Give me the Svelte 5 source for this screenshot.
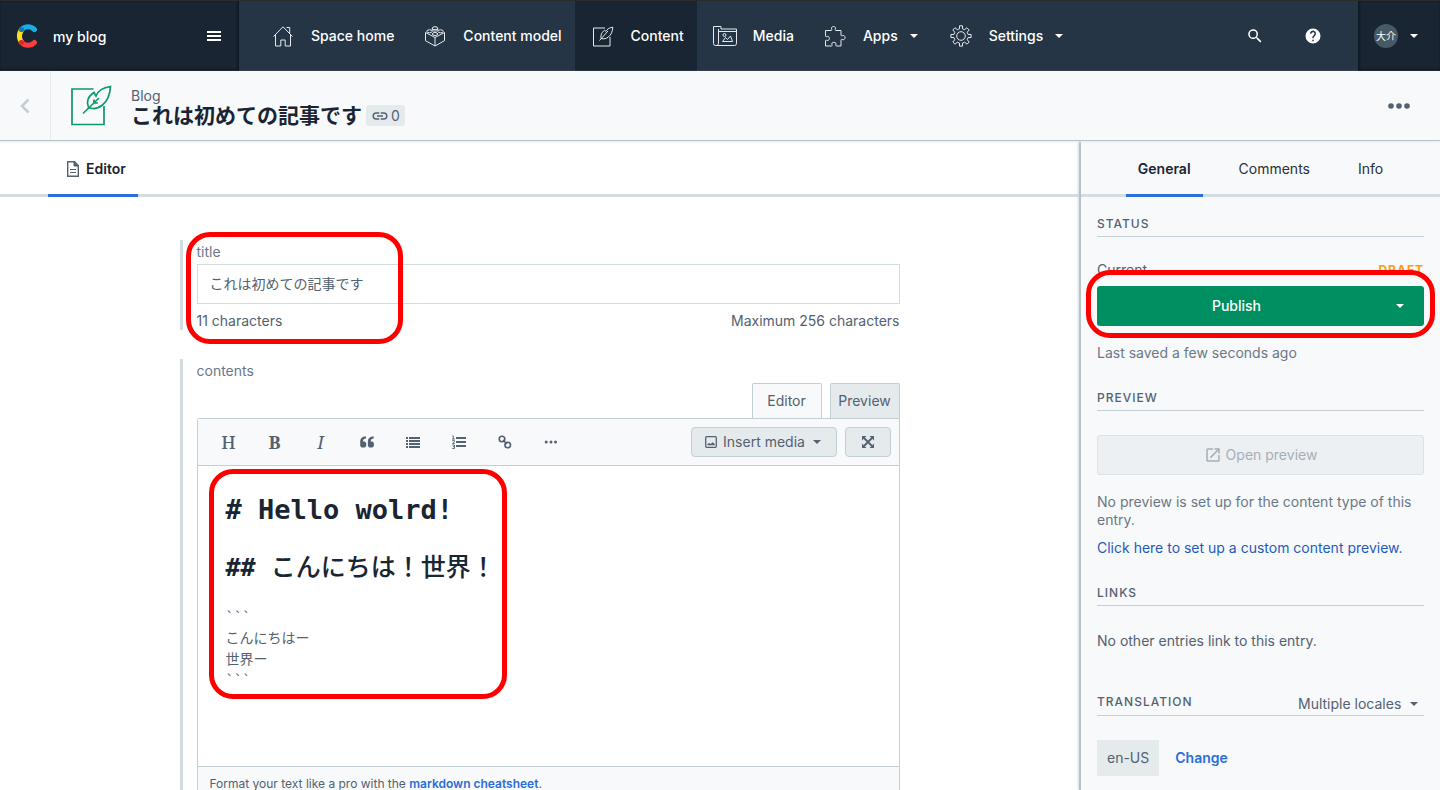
<script lang="ts">
  let title = $state("これは初めての記事です");
  let locale = $state("multiple");
  const maxLength = 256;

  const navItems = [
    { id: "home", label: "Space home" },
    { id: "model", label: "Content model" },
    { id: "content", label: "Content", active: true },
    { id: "media", label: "Media" },
    { id: "apps", label: "Apps", menu: true },
    { id: "settings", label: "Settings", menu: true },
  ];

  const tools = ["Heading", "Bold", "Italic", "Quote", "Bullet list", "Numbered list", "Link", "More"];
  const sideTabs = ["General", "Comments", "Info"];
</script>

{#snippet caret()}
  <svg class="caret" viewBox="0 0 20 20"><path d="M6 8h8l-4 4z" /></svg>
{/snippet}

{#snippet navIcon(id)}
  <svg class="line-icon" viewBox="0 0 24 24">
    {#if id === "home"}
      <path d="M2.5 12.5L12 2.8l9.500 9.700M15.500 3.500h3.200v5.800M4.500 11v11h5.300v-6h4.400v6h5.300V11" />
    {:else if id === "model"}
      <path d="M2.500 8.500v8.200L12 22l9.500-5.300V8.500L12 13.500zM12 13.500V22" />
      <ellipse cx="12" cy="4.200" rx="2.700" ry="1.500" />
      <ellipse cx="6.500" cy="7.300" rx="2.700" ry="1.500" />
      <ellipse cx="17.500" cy="7.300" rx="2.700" ry="1.500" />
      <ellipse cx="12" cy="10" rx="2.700" ry="1.500" />
      <path d="M9.300 4.200v2c1 1.200 4.400 1.200 5.400 0v-2" />
    {:else if id === "content"}
      <path d="M14 4H2.500v18H19V13M8.500 16.500L17 7M10.200 14.500c-1-3.200.8-6.500 3.300-8.300l1 1.200c1.600-2.300 4.500-4 7.300-4.200-.2 4-1.600 7.700-4.500 9.900-2.100 1.600-4.500 2.200-7.100 1.400z" />
    {:else if id === "media"}
      <path d="M5.500 19V5M.500 2.500H8V5h15.500v14.500a2 2 0 0 1-2 2h-19a2 2 0 0 1-2-2zM5.500 7.500h18M5.500 18.500c0 2-.5 3-2.500 3" />
      <path d="M9.500 17.500l3-4 2 2 3-3.500 2 5.500z" />
      <circle cx="11.500" cy="11" r="1.500" />
    {:else if id === "apps"}
      <path d="M2.500 6.500H8c.8 0 1-.5.700-1.200-.8-1.600.3-2.800 1.800-2.800s2.600 1.200 1.800 2.800c-.3.700-.1 1.200.7 1.200h5V11c0 .8.500 1 1.200.700 1.500-.8 2.800.3 2.800 1.900s-1.300 2.700-2.800 1.900c-.7-.3-1.200-.1-1.200.7V22h-4.500c-.8 0-1-.5-.7-1.200.8-1.500-.4-2.500-1.900-2.500s-2.700 1-1.900 2.500c.3.700.1 1.200-.7 1.200H2.500v-5c0-.8.500-1 1.200-.7 1.600.8 2.600-.4 2.600-1.900s-1-2.600-2.600-1.800c-.7.300-1.200.1-1.200-.7z" />
    {:else}
      <path d="M10.500 1.800h3v3l2.200.9 2.200-2 2.300 2.300-2 2.200.9 2.300h3v3h-3l-.9 2.200 2 2.300-2.200 2.200-2.300-2-2.200.9v3h-3v-3l-2.200-.9-2.300 2L3.800 18l2-2.300-.9-2.200h-3v-3h3l.9-2.300-2-2.200L6 3.700l2.300 2 2.200-.9z" />
      <circle cx="12" cy="12" r="4.300" />
    {/if}
  </svg>
{/snippet}

<div class="app">
  <header class="topbar">
    <div class="space">
      <svg class="logo" viewBox="0 0 22 24">
        <path d="M6 5.500a9.500 9.500 0 0 0 0 13" stroke="#ffe01b" />
        <path d="M5.500 5.500a9 9 0 0 1 13 0" stroke="#19aee5" />
        <path d="M5.500 18.500a9 9 0 0 0 13 0" stroke="#ff3d3d" />
        <circle cx="5.500" cy="5.500" r="2.600" fill="#0a7cc0" />
        <circle cx="5.500" cy="18.500" r="2.600" fill="#e0282c" />
      </svg>
      <span class="space-name">my blog</span>
      <button class="plain" aria-label="Open menu">
        <svg width="14" height="10" viewBox="0 0 14 10"><path d="M0 0h14v2H0zM0 4h14v2H0zM0 8h14v2H0z" fill="#fff" /></svg>
      </button>
    </div>
    <nav>
      {#each navItems as item}
        <a href="#{item.id}" class:active={item.active} class:menu={item.menu}>
          {@render navIcon(item.id)}
          <span>{item.label}</span>
          {#if item.menu}{@render caret()}{/if}
        </a>
      {/each}
    </nav>
    <div class="actions">
      <button class="plain" aria-label="Search">
        <svg width="18" height="18" viewBox="0 0 24 24" fill="#fff"><path d="M15.500 14h-.8l-.3-.3A6.500 6.500 0 1 0 13.700 14.400l.3.300v.8l5 5 1.500-1.500zm-6 0a4.500 4.500 0 1 1 0-9 4.500 4.500 0 0 1 0 9z" /></svg>
      </button>
      <button class="plain" aria-label="Help">
        <svg width="18" height="18" viewBox="0 0 24 24" fill="#fff"><path d="M12 2a10 10 0 1 0 0 20 10 10 0 0 0 0-20zm1 17h-2v-2h2zm2.100-7.700l-.9.900C13.400 12.900 13 13.500 13 15h-2v-.5c0-1.100.5-2.100 1.200-2.800l1.200-1.300A2 2 0 1 0 10 9H8a4 4 0 1 1 7.100 2.300z" /></svg>
      </button>
    </div>
    <button class="account" aria-label="Account">
      <span class="avatar">大介</span>
      {@render caret()}
    </button>
  </header>

  <div class="entry-header">
    <button class="back plain" aria-label="Back">
      <svg width="10" height="16" viewBox="0 0 10 16"><path d="M8.500 1.500L2 8l6.500 6.500" fill="none" stroke="#c3cfd5" stroke-width="2.500" /></svg>
    </button>
    <svg class="entry-icon" viewBox="0 0 42 42">
      <path d="M23.500 4H2v35.500h32V21" />
      <path d="M13 28.500L29 13M18.500 22.500c-2.500-5.500-.5-11.500 5.500-15l2 3.500c2-5.500 7.500-8.500 14.500-9.500C40 9 37.500 16 32.500 20c-4.500 3.500-9.500 4.500-14 2.500zM24 18v-3.500M24 18h4" />
    </svg>
    <div class="entry-title">
      <span class="type">Blog</span>
      <div class="title-row">
        <h1>{title}</h1>
        <span class="badge">
          <svg width="18" height="18" viewBox="0 0 24 24" fill="currentColor"><path d="M3.900 12A3.100 3.100 0 0 1 7 8.900h4V7H7a5 5 0 0 0 0 10h4v-1.900H7A3.100 3.100 0 0 1 3.900 12zM8 13h8v-2H8zm9-6h-4v1.900h4a3.100 3.100 0 1 1 0 6.200h-4V17h4a5 5 0 0 0 0-10z" /></svg>
          0
        </span>
      </div>
    </div>
    <button class="more plain" aria-label="Entry actions">
      <svg width="22" height="6" viewBox="0 0 22 6" fill="#536171"><circle cx="3" cy="3" r="2.800" /><circle cx="11" cy="3" r="2.800" /><circle cx="19" cy="3" r="2.800" /></svg>
    </button>
  </div>

  <div class="body">
    <main>
      <div class="tabs main-tabs">
        <button class="tab active">
          <svg width="12" height="16" viewBox="0 0 12 16" fill="none" stroke="#536171"><path d="M7.500.700H.700v14.600h10.600V4.500z" stroke-width="1.400" /><path d="M7 .700v4.300h4.500z" fill="#536171" /><path d="M3 8.500h6M3 11.500h6" /></svg>
          Editor
        </button>
      </div>
      <div class="form">
        <div class="field">
          <label for="title">title</label>
          <input id="title" type="text" maxlength={maxLength} bind:value={title} />
          <div class="hint">
            <span>{title.length} characters</span>
            <span>Maximum {maxLength} characters</span>
          </div>
          <div class="mark mark-title"></div>
        </div>

        <div class="field">
          <span class="label" id="contents-label">contents</span>
          <div class="mode-tabs">
            <button class="mode current">Editor</button>
            <button class="mode">Preview</button>
          </div>
          <div class="editor">
            <div class="toolbar">
              {#each tools as tool}
                <button class="tool" aria-label={tool}>
                  {#if tool === "Heading"}
                    <span>H</span>
                  {:else if tool === "Bold"}
                    <b>B</b>
                  {:else if tool === "Italic"}
                    <i>I</i>
                  {:else if tool === "Quote"}
                    <svg width="14" height="12" viewBox="0 0 14 12"><path d="M6 .500v2C4 2.500 3 3.500 3 5.500h1.800L6.200 7v3L4.800 11.500H1.500L.200 10V5.500C.200 2.500 2 .500 6 .500zM13.700.500v2c-2 0-3 1-3 3h1.800L13.900 7v3l-1.400 1.500H9.200L7.900 10V5.500c0-3 1.800-5 5.800-5z" /></svg>
                  {:else if tool === "Bullet list"}
                    <svg width="14" height="12" viewBox="0 0 14 12"><path d="M0 1h2v2H0zM3 1h11v2H3zM0 4h2v2H0zM3 4h11v2H3zM0 7h2v2H0zM3 7h11v2H3zM0 10h2v2H0zM3 10h11v2H3z" /></svg>
                  {:else if tool === "Numbered list"}
                    <svg width="14" height="14" viewBox="0 0 14 14"><path d="M4 2h10v2H4zM4 6h10v2H4zM4 10h10v2H4z" /><path d="M.300 1h1v3M0 4h3M.200 5.600h2.300v1.200L.500 8.400h2.300M.200 10h2.300v3.500H.200M.800 11.700h1.700" fill="none" stroke="#536171" stroke-width=".9" /></svg>
                  {:else if tool === "Link"}
                    <svg width="14" height="14" viewBox="0 0 14 14" fill="none" stroke="#536171" stroke-width="1.600"><circle cx="4" cy="4" r="2.800" /><circle cx="9.700" cy="10" r="2.800" /><path d="M5 5l4 4" /></svg>
                  {:else}
                    <svg width="14" height="4" viewBox="0 0 14 4"><circle cx="2.200" cy="2" r="1.500" /><circle cx="7" cy="2" r="1.500" /><circle cx="11.500" cy="2" r="1.500" /></svg>
                  {/if}
                </button>
              {/each}
              <button class="grey insert">
                <svg width="12" height="12" viewBox="0 0 12 12"><rect x=".7" y=".7" width="10.600" height="10.600" rx="1" fill="none" stroke="#536171" stroke-width="1.300" /><path d="M2.500 9.200V8l1.700-1L5.500 8l2.300-1.800 1.900 1.800v1.200z" /></svg>
                Insert media
                {@render caret()}
              </button>
              <button class="grey expand" aria-label="Expand">
                <svg width="12" height="12" viewBox="0 0 12 12"><path d="M0 0h4.500L0 4.500zM12 0v4.500L7.500 0zM0 12V7.500L4.500 12zM12 12H7.500L12 7.500z" /><path d="M2 2l8 8M10 2l-8 8" stroke="#536171" stroke-width="1.800" /></svg>
              </button>
            </div>
            <div class="source" role="textbox" tabindex="0" aria-multiline="true" aria-labelledby="contents-label" contenteditable="true">
              <div class="h1"># Hello wolrd!</div>
              <div class="h2">## <span>こんにちは！世界！</span></div>
              <div>```</div>
              <div>こんにちはー</div>
              <div>世界ー</div>
              <div>```</div>
            </div>
            <div class="editor-foot">Format your text like a pro with the <a href="#cheatsheet">markdown cheatsheet</a>.</div>
            <div class="mark mark-source"></div>
          </div>
        </div>
      </div>
    </main>

    <aside>
      <div class="tabs side-tabs">
        {#each sideTabs as tab, i}
          <button class="tab" class:active={i === 0}>{tab}</button>
        {/each}
      </div>
      <div class="side">
        <section>
          <h2>Status</h2>
          <div class="status"><span>Current</span><strong>DRAFT</strong></div>
          <div class="publish">
            <button class="go">Publish</button>
            <button class="go-menu" aria-label="More publish actions">{@render caret()}</button>
            <div class="mark mark-publish"></div>
          </div>
          <p class="muted">Last saved a few seconds ago</p>
        </section>
        <section>
          <h2>Preview</h2>
          <button class="open" disabled>
            <svg width="18" height="18" viewBox="0 0 24 24" fill="currentColor"><path d="M19 19H5V5h7V3H5a2 2 0 0 0-2 2v14a2 2 0 0 0 2 2h14a2 2 0 0 0 2-2v-7h-2zM14 3v2h3.600l-9.800 9.800 1.400 1.400L19 6.400V10h2V3z" /></svg>
            Open preview
          </button>
          <p class="muted">No preview is set up for the content type of this entry.</p>
          <a class="setup" href="#preview">Click here to set up a custom content preview.</a>
        </section>
        <section class="links">
          <h2>Links</h2>
          <p>No other entries link to this entry.</p>
        </section>
        <section>
          <div class="translation">
            <h2>Translation</h2>
            <div class="locales">
              <select aria-label="Locales" bind:value={locale}>
                <option value="multiple">Multiple locales</option>
                <option value="single">Single locale</option>
              </select>
              {@render caret()}
            </div>
          </div>
          <div class="locale-row">
            <span class="pill">en-US</span>
            <a href="#locales">Change</a>
          </div>
        </section>
      </div>
    </aside>
  </div>
</div>

<style>
  :global(body) {
    margin: 0;
  }

  .app {
    display: flex;
    flex-direction: column;
    height: 100vh;
    overflow: hidden;
    background: #fff;
    color: #536171;
    font-family: Inter, "Noto Sans CJK JP", sans-serif;
    font-size: 14px;
    line-height: 18px;
  }
  .app :global(*) {
    box-sizing: border-box;
  }
  button,
  input,
  select {
    font: inherit;
    color: inherit;
    margin: 0;
  }
  button {
    cursor: pointer;
  }
  svg {
    display: block;
    flex: none;
  }
  a {
    text-decoration: none;
  }
  p {
    margin: 0;
  }
  .plain {
    display: flex;
    padding: 0;
    border: 0;
    background: none;
  }
  .caret {
    width: 20px;
    height: 20px;
    fill: currentColor;
  }

  /* top bar */
  .topbar {
    display: flex;
    flex: none;
    height: 71px;
    border-top: 1px solid #2b2b2b;
    background: #253546;
    color: #fff;
    font-weight: 500;
  }
  .space {
    display: flex;
    align-items: center;
    width: 239px;
    padding: 0 18px 0 16px;
    background: #192532;
    box-shadow: inset -1px -1px 3px #0c141c;
  }
  .logo {
    width: 22px;
    height: 24px;
    fill: none;
    stroke-width: 5;
    stroke-linecap: round;
  }
  .space-name {
    flex: 1;
    padding: 2px 0 0 15px;
  }
  nav {
    display: flex;
    flex: 1;
    padding-left: 16px;
  }
  nav a {
    display: flex;
    align-items: center;
    gap: 16px;
    padding: 0 13px 0 16px;
    color: #fff;
  }
  nav a.active {
    background: #192532;
  }
  nav a.menu {
    gap: 6px;
    padding-right: 9px;
  }
  nav a.menu .line-icon {
    margin-right: 10px;
  }
  .line-icon {
    width: 24px;
    height: 24px;
    fill: none;
    stroke: #e5ebed;
  }
  .actions {
    display: flex;
    align-items: center;
    gap: 40px;
    padding-right: 36px;
  }
  .account {
    display: flex;
    align-items: center;
    gap: 6px;
    width: 82px;
    padding: 0 0 0 16px;
    border: 0;
    background: #192532;
    box-shadow: inset 1px -1px 3px #0c141c;
    color: #fff;
  }
  .avatar {
    display: flex;
    align-items: center;
    justify-content: center;
    width: 24px;
    height: 24px;
    border-radius: 50%;
    background: #455a64;
    font-size: 10px;
    font-weight: 400;
  }

  /* entry header */
  .entry-header {
    position: relative;
    z-index: 1;
    display: flex;
    flex: none;
    align-items: center;
    height: 70px;
    border-bottom: 1px solid #b4c3ca;
    background: #f7f9fa;
    box-shadow: 0 1px 2px #e5ebed;
  }
  .back {
    align-items: center;
    align-self: stretch;
    justify-content: center;
    width: 51px;
    border-right: 1px solid #e5ebed;
  }
  .entry-icon {
    width: 42px;
    height: 42px;
    margin: 0 19px;
    fill: none;
    stroke: #0e9968;
    stroke-width: 1.700;
  }
  .entry-title {
    flex: 1;
    padding-top: 2px;
  }
  .type {
    display: block;
  }
  .title-row {
    display: flex;
    align-items: center;
    gap: 4px;
  }
  h1 {
    margin: 0;
    color: #192532;
    font-size: 21px;
    font-weight: 700;
    line-height: 22px;
  }
  .badge {
    display: flex;
    align-items: center;
    gap: 2px;
    height: 21px;
    padding: 0 5px;
    border-radius: 3px;
    background: #e5ebed;
  }
  .more {
    margin-right: 30px;
  }

  .body {
    display: flex;
    flex: 1;
    min-height: 0;
  }
  main {
    flex: 1;
    min-width: 0;
    overflow: hidden;
  }
  .tabs {
    display: flex;
    height: 56px;
    box-shadow: inset 0 -3px #d3dce0;
  }
  .tab {
    display: flex;
    align-items: center;
    gap: 7px;
    padding: 0 12px;
    border: 0;
    background: none;
    color: #2a3039;
  }
  .tab.active {
    box-shadow: inset 0 -3px #2a6ddb;
    color: #192532;
    font-weight: 600;
  }
  .main-tabs {
    padding-left: 48px;
  }
  .main-tabs .tab {
    padding: 0 12px 0 19px;
  }

  /* form */
  .form {
    display: flex;
    flex-direction: column;
    gap: 29px;
    max-width: 720px;
    margin: 43px auto 0;
  }
  .field {
    position: relative;
    padding-left: 14px;
    border-left: 3px solid #d3dce0;
  }
  .field label,
  .label {
    display: block;
    padding: 3px 0;
    color: #6a7888;
  }
  .field input {
    display: block;
    width: 100%;
    height: 40px;
    padding: 0 12px 2px;
    border: 1px solid #d3dce0;
    background: #fff;
  }
  .hint {
    display: flex;
    justify-content: space-between;
    padding-top: 8px;
  }
  .mode-tabs {
    display: flex;
    justify-content: flex-end;
    gap: 8px;
  }
  .mode {
    width: 70px;
    height: 35px;
    padding: 0;
    border: 1px solid #c3cfd5;
    border-bottom: 0;
    border-radius: 2px 2px 0 0;
    background: #e5ebed;
  }
  .mode.current {
    background: #f7f9fa;
  }
  .editor {
    position: relative;
    border: 1px solid #c3cfd5;
    border-radius: 2px 0 0 0;
  }
  .toolbar {
    display: flex;
    align-items: center;
    height: 47px;
    padding: 0 8px;
    border-bottom: 1px solid #c3cfd5;
    background: #f7f9fa;
  }
  .tool {
    display: flex;
    align-items: center;
    justify-content: center;
    width: 46px;
    height: 30px;
    padding: 0;
    border: 0;
    background: none;
    fill: #536171;
    font-family: "Noto Serif", "Liberation Serif", serif;
    font-size: 18px;
  }
  .tool span {
    font-weight: 500;
  }
  .grey {
    display: flex;
    align-items: center;
    justify-content: center;
    height: 30px;
    padding: 0;
    border: 1px solid #c3cfd5;
    border-radius: 4px;
    background: #e5ebed;
    fill: #536171;
  }
  .insert {
    gap: 6px;
    width: 146px;
    margin: 0 8px 0 auto;
    padding-left: 5px;
  }
  .insert .caret {
    margin-left: -4px;
  }
  .expand {
    width: 46px;
  }
  .source {
    height: 300px;
    padding: 15px 28px;
    outline: 0;
    font-family: "DejaVu Sans Mono", "Noto Sans CJK JP", monospace;
    line-height: 21px;
  }
  .h1,
  .h2 {
    color: #192532;
    font-size: 27px;
    font-weight: 700;
    line-height: 58px;
  }
  .h2 {
    margin-bottom: 10px;
    font-size: 25px;
  }
  .h2 span {
    font-weight: 500;
  }
  .editor-foot {
    padding: 8px 12px;
    border-top: 1px solid #c3cfd5;
    background: #f7f9fa;
    font-size: 12px;
  }
  .editor-foot a {
    color: #2a6ddb;
    font-weight: 600;
  }

  /* hand-drawn callouts lying over the page */
  .mark {
    position: absolute;
    z-index: 2;
    border: 5px solid #f00;
    border-radius: 24px;
    pointer-events: none;
  }
  .mark-title {
    top: -8px;
    left: 3px;
    width: 217px;
    height: 112px;
  }
  .mark-source {
    top: 50px;
    left: 11px;
    width: 298px;
    height: 230px;
  }
  .mark-publish {
    inset: -16px -11px -12px;
  }

  /* sidebar */
  aside {
    width: 361px;
    flex: none;
    border-left: 2px solid #b4c3ca;
    background: #f7f9fa;
    box-shadow: -1px 0 2px #d3dce0;
  }
  .side-tabs {
    justify-content: center;
    gap: 24px;
  }
  .side {
    padding: 18px 16px 0;
  }
  h2 {
    margin: 0 0 24px;
    padding-bottom: 3px;
    border-bottom: 1px solid #c3cfd5;
    font-size: 12px;
    font-weight: 500;
    letter-spacing: 1px;
    text-transform: uppercase;
  }
  section {
    margin-bottom: 27px;
  }
  .links {
    margin-bottom: 43px;
  }
  .links p {
    padding-top: 2px;
  }
  .muted {
    color: #6a7888;
  }
  .status {
    display: flex;
    justify-content: space-between;
    margin-bottom: 7px;
  }
  .status strong {
    color: #ff9d0a;
    font-size: 12px;
    font-weight: 700;
    letter-spacing: 1px;
  }
  .publish {
    position: relative;
    display: flex;
    margin-bottom: 18px;
    color: #fff;
    font-weight: 500;
  }
  .publish button {
    height: 40px;
    border: 0;
    background: #008f60;
  }
  .go {
    flex: 1;
    border-radius: 3px 0 0 3px;
  }
  .go-menu {
    width: 48px;
    padding: 0 14px;
    border-radius: 0 3px 3px 0;
  }
  .open {
    display: flex;
    align-items: center;
    justify-content: center;
    gap: 4px;
    width: 100%;
    height: 40px;
    margin-bottom: 18px;
    border: 1px solid #dbe3e7;
    border-radius: 3px;
    background: #ecf0f2;
    color: #a5afb8;
  }
  .setup {
    display: block;
    margin-top: 10px;
    color: #1f5bbd;
  }
  .translation {
    display: flex;
    justify-content: space-between;
    margin-bottom: 24px;
    border-bottom: 1px solid #c3cfd5;
  }
  .translation h2 {
    margin: 0;
    border: 0;
  }
  .locales {
    display: flex;
    align-items: center;
    height: 22px;
  }
  .locales select {
    padding: 0 2px 0 0;
    border: 0;
    background: none;
    appearance: none;
  }
  .locale-row {
    display: flex;
    align-items: center;
    gap: 16px;
  }
  .pill {
    padding: 9px 10px;
    background: #e5ebed;
  }
  .locale-row a {
    color: #2a6ddb;
    font-weight: 600;
  }
</style>
